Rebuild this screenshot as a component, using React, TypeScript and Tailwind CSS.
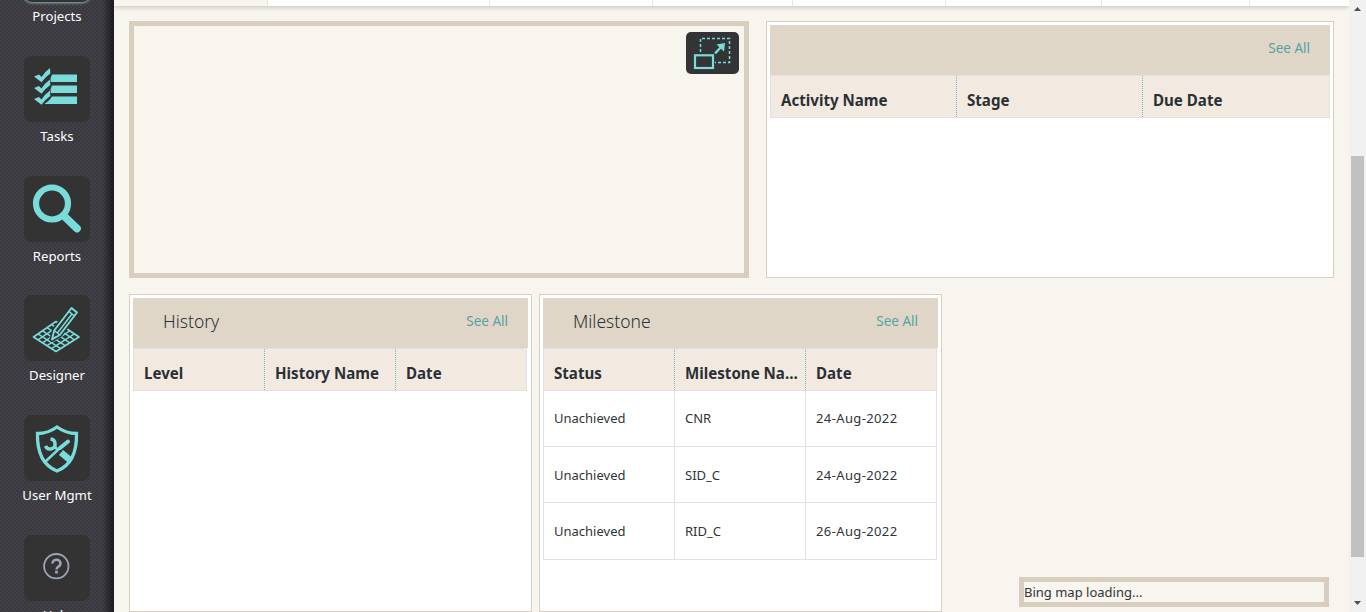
import React from "react";

const TEAL = "#7adcda";

function TasksIcon() {
  return (
    <svg width="66" height="66" viewBox="0 0 66 66" fill={TEAL}>
      <path d="M28 18.500H53v7.500H24.500Q27 22 28 18.500Z" />
      <path d="M28 29.500H53v7.500H24.500Q27 33 28 29.500Z" />
      <path d="M28 40.500H53V48H20.500Q26 44 28 40.500Z" />
      {[0, 11.500, 22.500].map((y) => (
        <path
          key={y}
          transform={`translate(0 ${y})`}
          d="M10 20.500l5-2 2.500 2.500q3.500-5.500 8.500-9l.3 5.500q-5 3.500-8.800 8.700Z"
          stroke="#333"
          strokeWidth="1.200"
          paintOrder="stroke"
        />
      ))}
    </svg>
  );
}

function ReportsIcon() {
  return (
    <svg width="66" height="66" viewBox="0 0 66 66" fill="none" stroke={TEAL}>
      <circle cx="28" cy="27.500" r="16" strokeWidth="6.200" />
      <path d="M40 40L53 52.500" strokeWidth="7.800" strokeLinecap="round" />
    </svg>
  );
}

function DesignerIcon() {
  return (
    <svg width="66" height="66" viewBox="0 0 66 66" fill="none" stroke={TEAL} strokeWidth="1.500" strokeLinejoin="round">
      <path d="M32 26.500L9.500 42 32 56.500 55 42Z" strokeWidth="1.700" />
      <path d="M27.500 29.600L50.400 44.900M23 32.700L45.800 47.800M18.500 35.800L41.200 50.700M14 38.900L36.600 53.600M36.600 29.600L14 44.900M41.200 32.700L18.500 47.800M45.800 35.800L23 50.700M50.400 38.900L27.500 53.600" strokeWidth="1.400" />
      <path d="M28 44.500l2.200-9L47.500 13l5.500 4.500L35.700 40Z" fill="#333" stroke="#333" strokeWidth="5" />
      <path d="M28 44.500l2.200-9L47.500 13l5.500 4.500L35.700 40Z" fill="#333" strokeWidth="1.900" />
      <path d="M45 16.500l5.500 4.500M48 19L33 38.500M30.200 35.500l5.500 4.500M28 44.500l4-3" />
    </svg>
  );
}

function UserIcon() {
  return (
    <svg width="66" height="66" viewBox="0 0 66 66" fill="none" stroke={TEAL}>
      <path d="M33 12q-9 6.500-19.500 6.500C13 37 18 50 33 56c15-6 20-19 19.500-37.500Q42 18.500 33 12Z" strokeWidth="3.300" />
      <path d="M22 46L37 32" strokeWidth="2.500" strokeLinecap="round" />
      <path d="M36 33L44 26.500" strokeWidth="4" strokeLinecap="round" />
      <path d="M26.500 24a5 5 0 1 1-5 7" strokeWidth="3.500" />
      <path d="M30 31l4 4" strokeWidth="3" />
      <path d="M37 37.500l9 7.500" strokeWidth="6.500" />
    </svg>
  );
}

function HelpIcon() {
  return (
    <svg width="66" height="66" viewBox="0 0 66 66" fill="none" stroke="#9da4b4">
      <circle cx="32.300" cy="31.200" r="12.200" strokeWidth="1.800" />
      <path d="M28.500 28.500c0-5 8-5 8 0 0 3-4 3-4 6" strokeWidth="2.600" />
      <path d="M32.500 35.800v2.800" strokeWidth="2.800" />
    </svg>
  );
}

function ExpandIcon() {
  return (
    <svg width="53" height="42" viewBox="0 0 53 42" fill="none" stroke={TEAL}>
      <path d="M14.500 20V6.500H43.500V30.500H29" strokeWidth="1.500" strokeDasharray="3 2" />
      <rect x="9" y="23.300" width="18" height="12.700" strokeWidth="2.200" />
      <path d="M29 21.500l7-7.500" strokeWidth="2.400" />
      <path d="M30.500 12.500l8.500-1.500-1 8.500Z" fill={TEAL} stroke="none" />
    </svg>
  );
}

const NAV = [
  { label: "Projects", icon: null },
  { label: "Tasks", icon: <TasksIcon /> },
  { label: "Reports", icon: <ReportsIcon /> },
  { label: "Designer", icon: <DesignerIcon /> },
  { label: "User Mgmt", icon: <UserIcon /> },
  { label: "Help", icon: <HelpIcon /> },
];

function Sidebar() {
  return (
    <nav className="h-full w-[114px] shrink-0 overflow-hidden bg-[#424147] bg-[linear-gradient(90deg,transparent_102px,rgba(15,15,20,0.7)_113px),conic-gradient(#39383e_25%,transparent_0_50%,#39383e_0_75%,transparent_0)] bg-[size:114px_612px,4px_4px]">
      <div className="-mt-[64px] flex w-full flex-col items-center">
        {NAV.map((n, i) => (
          <div key={n.label} className="flex h-[119.750px] shrink-0 flex-col items-center">
            <div
              className={
                "h-[66px] w-[66px] shrink-0 overflow-hidden rounded-lg bg-[#333333] " +
                (i === 0 ? "shadow-[0_0_3px_1px_#8fb3b5]" : "")
              }
            >
              {n.icon}
            </div>
            <span className="mt-[4.200px] whitespace-nowrap text-[13.200px] leading-5 text-white">{n.label}</span>
          </div>
        ))}
      </div>
    </nav>
  );
}

function PanelHead({ title }: { title?: string }) {
  return (
    <div className="flex h-[50px] shrink-0 items-center justify-between bg-[#dfd6c7] pl-[30px] pr-5">
      <span className="pb-1 text-[17.500px] font-light text-[#2c3135]">{title}</span>
      <a className="pb-[3px] text-[13.500px] text-[#55a3a3]">See All</a>
    </div>
  );
}

function HeadRow({ cells, widths }: { cells: string[]; widths: string }) {
  return (
    <div className={"grid h-[43px] shrink-0 border border-[#e1e1e1] bg-[#f2eae1] " + widths}>
      {cells.map((c, i) => (
        <div
          key={c}
          className={
            "overflow-hidden text-ellipsis whitespace-nowrap pl-2.5 pr-0.5 pt-3 text-[15.100px] font-bold leading-6 text-[#2b3035] " +
            (i < cells.length - 1 ? "border-r border-dotted border-[#69bdbb]" : "")
          }
        >
          {c}
        </div>
      ))}
    </div>
  );
}

const ROWS = [
  ["Unachieved", "CNR", "24-Aug-2022"],
  ["Unachieved", "SID_C", "24-Aug-2022"],
  ["Unachieved", "RID_C", "26-Aug-2022"],
];

export default function App() {
  return (
    <div className="flex h-[612px] w-[1366px] overflow-hidden bg-[#f8f5ee] font-['Noto_Sans','Open_Sans',sans-serif]">
      <Sidebar />
      <main className="flex w-[1235px] shrink-0 flex-col">
        <div className="grid h-[6px] shrink-0 grid-cols-[154px_222px_163px_140px_153px_156px_148px_99px] bg-white shadow-[0_1px_5px_rgba(0,0,0,0.24)]">
          {[0, 1, 2, 3, 4, 5, 6].map((i) => (
            <div key={i} className={"border-r border-[#e4e4e4] " + (i === 0 ? "bg-[#f8f5ee]" : "")} />
          ))}
        </div>
        <div className="mt-[15px] flex h-[257px] shrink-0 gap-[17px] pl-[15px]">
          <section className="flex w-[620px] justify-end border-[5px] border-[#d8cebf] pr-[5px] pt-[6px]">
            <button className="h-[42px] w-[53px] rounded-[5px] bg-[#333435]">
              <ExpandIcon />
            </button>
          </section>
          <section className="w-[568px] border border-[#d8cebf] bg-white p-[3px]">
            <PanelHead />
            <HeadRow cells={["Activity Name", "Stage", "Due Date"]} widths="grid-cols-[186px_186px_1fr]" />
          </section>
        </div>
        <div className="mt-4 flex h-[318px] shrink-0 pl-[15px]">
          <section className="w-[403px] border border-[#d8cebf] bg-white p-[3px]">
            <PanelHead title="History" />
            <div className="w-[394px]">
              <HeadRow cells={["Level", "History Name", "Date"]} widths="grid-cols-[131px_131px_1fr]" />
            </div>
          </section>
          <section className="ml-[7px] w-[403px] border border-[#d8cebf] bg-white p-[3px]">
            <PanelHead title="Milestone" />
            <div className="w-[394px]">
              <HeadRow cells={["Status", "Milestone Name", "Date"]} widths="grid-cols-[131px_131px_1fr]" />
              <div className="border-x border-[#e1e1e1]">
                {ROWS.map((r, i) => (
                  <div
                    key={i}
                    className={
                      "grid grid-cols-[131px_131px_1fr] border-b border-[#e1e1e1] " + (i === 2 ? "h-[57px]" : "h-14")
                    }
                  >
                    {r.map((c, j) => (
                      <div
                        key={j}
                        className={
                          "flex items-center pl-2.5 text-[13px] text-[#303438] " +
                          (i > 0 ? "pt-0.5 " : "") +
                          (j < 2 ? "border-r border-[#e1e1e1]" : "tracking-[0.38px]")
                        }
                      >
                        {c}
                      </div>
                    ))}
                  </div>
                ))}
              </div>
            </div>
          </section>
          <div className="ml-[77px] mt-[283px] h-[30px] w-[310px] border-[5px] border-[#d8cebf] text-[13px] leading-5 text-[#303438]">
            Bing map loading...
          </div>
        </div>
      </main>
      <div className="flex w-[17px] shrink-0 flex-col items-center bg-[#f1f1f1]">
        <svg width="17" height="17" viewBox="0 0 17 17" fill="#505050" className="shrink-0">
          <path d="M5 11h7L8.500 7Z" />
        </svg>
        <div className="mt-[139px] h-[401px] w-[13px] shrink-0 bg-[#c1c1c1]" />
        <svg width="17" height="17" viewBox="0 0 17 17" fill="#505050" className="mt-auto shrink-0">
          <path d="M5 6h7L8.500 10Z" />
        </svg>
      </div>
    </div>
  );
}
